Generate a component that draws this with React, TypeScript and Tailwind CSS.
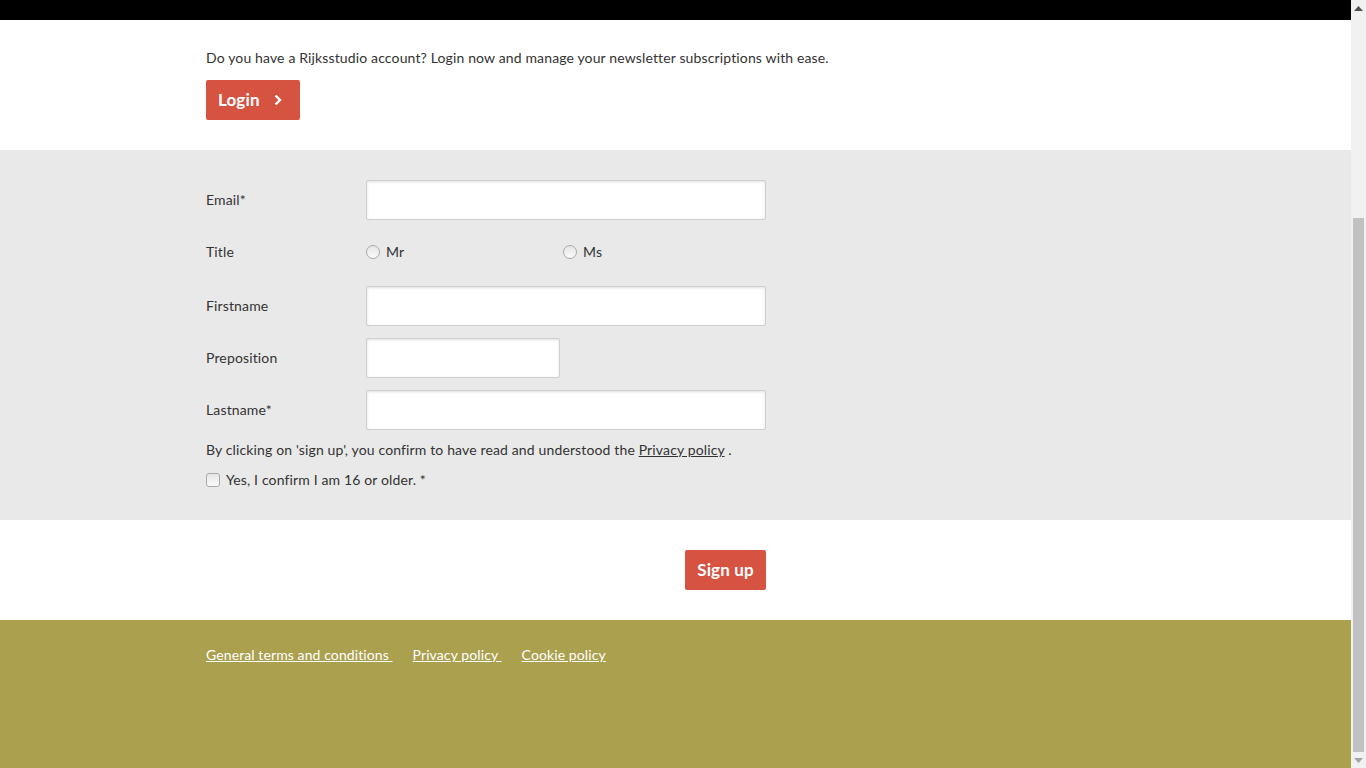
import React from "react";

function Input({ w }: { w: string }) {
  return (
    <input
      type="text"
      className={`${w} h-[40px] bg-white border border-[#cfcfcf] rounded-[2px] shadow-[inset_0_1px_3px_rgba(0,0,0,0.12)] outline-none`}
    />
  );
}

function Radio({ label }: { label: string }) {
  return (
    <label className="flex items-center gap-[6px]">
      <span className="w-[14px] h-[14px] rounded-full border border-[#a9a9a9] bg-gradient-to-b from-[#e6e6e6] to-[#fafafa]" />
      <span>{label}</span>
    </label>
  );
}

export default function App() {
  return (
    <div
      className="flex w-[1366px] h-[768px] overflow-hidden text-[14px] text-[#333333] tracking-[0.14px]"
      style={{ fontFamily: "Lato, 'Noto Sans', sans-serif" }}
    >
      <div className="w-[1351px] flex flex-col">
        <div className="h-[20px] bg-black" />
        <div className="h-[130px] bg-white pl-[206px] pt-[29px]">
          <p className="leading-[18px]">
            Do you have a Rijksstudio account? Login now and manage your newsletter subscriptions with ease.
          </p>
          <button className="mt-[13px] w-[94px] h-[40px] bg-[#d65241] rounded-[2px] text-white text-[17px] font-bold flex items-center pl-[12px] gap-[14px]">
            <span>Login</span>
            <svg width="8" height="12" viewBox="0 0 8 12">
              <path d="M1.5 1.5 L6 6 L1.5 10.5" fill="none" stroke="white" strokeWidth="2.4" />
            </svg>
          </button>
        </div>
        <div className="h-[370px] bg-[#e9e9e9] pl-[206px] pt-[30px]">
          <div className="flex items-center h-[40px]">
            <div className="w-[160px] -mt-[2px]">Email*</div>
            <Input w="w-[400px]" />
          </div>
          <div className="flex items-center h-[24px] mt-[20px]">
            <div className="w-[160px] -mt-[2px]">Title</div>
            <div className="w-[197px] -mt-[1px]">
              <Radio label="Mr" />
            </div>
            <div className="-mt-[1px]">
              <Radio label="Ms" />
            </div>
          </div>
          <div className="flex items-center h-[40px] mt-[22px]">
            <div className="w-[160px] -mt-[2px]">Firstname</div>
            <Input w="w-[400px]" />
          </div>
          <div className="flex items-center h-[40px] mt-[12px]">
            <div className="w-[160px] -mt-[2px]">Preposition</div>
            <Input w="w-[194px]" />
          </div>
          <div className="flex items-center h-[40px] mt-[12px]">
            <div className="w-[160px] -mt-[2px]">Lastname*</div>
            <Input w="w-[400px]" />
          </div>
          <p className="mt-[10px] leading-[20px]">
            By clicking on 'sign up', you confirm to have read and understood the{" "}
            <a className="underline">Privacy policy</a> .
          </p>
          <label className="flex items-center gap-[6px] mt-[10px] leading-[20px]">
            <span className="w-[14px] h-[14px] rounded-[3px] border border-[#a9a9a9] bg-gradient-to-b from-[#e6e6e6] to-[#fafafa]" />
            <span>Yes, I confirm I am 16 or older. *</span>
          </label>
        </div>
        <div className="h-[100px] bg-white pl-[685px] pt-[30px]">
          <button className="w-[81px] h-[40px] bg-[#d65241] rounded-[2px] text-white text-[17px] font-bold">
            Sign up
          </button>
        </div>
        <div className="flex-1 bg-[#aba04e] pl-[206px] pt-[26px] text-white">
          <div className="flex gap-[20px] leading-[18px] whitespace-pre tracking-[0.1px]">
            <a className="underline">{"General terms and conditions "}</a>
            <a className="underline">{"Privacy policy "}</a>
            <a className="underline">Cookie policy</a>
          </div>
        </div>
      </div>
      <div className="w-[15px] bg-[#f1f1f1] flex flex-col items-center">
        <div className="h-[17px] flex items-center justify-center">
          <svg width="9" height="5" viewBox="0 0 9 5">
            <path d="M0 5 L4.5 0 L9 5 Z" fill="#505050" />
          </svg>
        </div>
        <div className="mt-[201px] w-[11px] h-[534px] bg-[#c1c1c1]" />
        <div className="flex-1 flex items-center justify-center">
          <svg width="9" height="5" viewBox="0 0 9 5">
            <path d="M0 0 L4.5 5 L9 0 Z" fill="#a3a3a3" />
          </svg>
        </div>
      </div>
    </div>
  );
}
